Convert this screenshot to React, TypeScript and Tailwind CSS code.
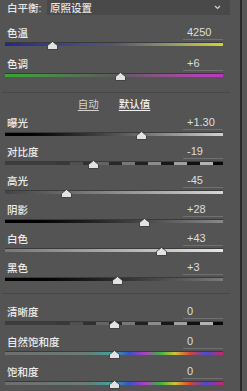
import type { ReactNode } from "react";

type TrackKind =
  | "temp"
  | "tint"
  | "exposure"
  | "contrast"
  | "highlights"
  | "shadows"
  | "whites"
  | "blacks"
  | "clarity"
  | "vibrance"
  | "saturation";

type Slider = {
  label: string;
  value: string;
  pos: number; // 0..1 along the track
  track: TrackKind;
};

const trackClass: Record<TrackKind, string> = {
  temp: "bg-linear-to-r from-[#24249a] via-[#565670] to-[#d4d422]",
  tint: "bg-linear-to-r from-[#2fa82f] via-[#5a5a5a] to-[#c62fc6]",
  exposure: "bg-linear-to-r from-[#000000] to-[#d2d2d2]",
  contrast: "bg-[#3c3c3c]",
  highlights: "bg-linear-to-r from-[#444444] to-[#d8d8d8]",
  shadows: "bg-linear-to-r from-[#000000] to-[#8a8a8a]",
  whites: "bg-linear-to-r from-[#777777] to-[#e6e6e6]",
  blacks: "bg-linear-to-r from-[#000000] to-[#7a7a7a]",
  clarity: "bg-[#3c3c3c]",
  vibrance:
    "bg-[linear-gradient(to_right,#6e6e6e_0%,#6a7c76_38%,#3aa4a4_50%,#3a50c8_57%,#b23cc0_64%,#3cb04a_71%,#d2c23a_78%,#d2443a_85%,#4a4ad2_92%,#c8286a_100%)]",
  saturation:
    "bg-[linear-gradient(to_right,#6e6e6e_0%,#6a7c76_38%,#3aa4a4_50%,#3a50c8_57%,#b23cc0_64%,#3cb04a_71%,#d2c23a_78%,#d2443a_85%,#4a4ad2_92%,#c8286a_100%)]",
};

const colorGroup: Slider[] = [
  { label: "色温", value: "4250", pos: 0.22, track: "temp" },
  { label: "色调", value: "+6", pos: 0.528, track: "tint" },
];

const toneGroup: Slider[] = [
  { label: "曝光", value: "+1.30", pos: 0.628, track: "exposure" },
  { label: "对比度", value: "-19", pos: 0.404, track: "contrast" },
  { label: "高光", value: "-45", pos: 0.28, track: "highlights" },
  { label: "阴影", value: "+28", pos: 0.638, track: "shadows" },
  { label: "白色", value: "+43", pos: 0.716, track: "whites" },
  { label: "黑色", value: "+3", pos: 0.514, track: "blacks" },
];

const presenceGroup: Slider[] = [
  { label: "清晰度", value: "0", pos: 0.5, track: "clarity" },
  { label: "自然饱和度", value: "0", pos: 0.5, track: "vibrance" },
  { label: "饱和度", value: "0", pos: 0.5, track: "saturation" },
];

function Segments() {
  // alternating dark / light blocks whose contrast grows to the right
  const seg = 13;
  const count = Math.ceil(218 / seg);
  const lerp = (a: number, b: number, t: number) => Math.round(a + (b - a) * t);
  return (
    <svg width="218" height="3" className="block">
      {Array.from({ length: count }).map((_, i) => {
        const t = Math.max(0, (i - 3) / (count - 4));
        const c = i % 2 === 0 ? lerp(60, 8, t) : lerp(60, 190, t);
        return <rect key={i} x={i * seg} y={0} width={seg} height={3} fill={`rgb(${c},${c},${c})`} />;
      })}
    </svg>
  );
}

function Thumb({ pos }: { pos: number }) {
  return (
    <svg
      width="11"
      height="9"
      viewBox="0 0 11 9"
      className="absolute top-[-2px]"
      style={{ left: `calc(${pos * 100}% - 5.5px)` }}
    >
      <polygon points="5.5,0.5 10.5,4.5 10.5,8.5 0.5,8.5 0.5,4.5" fill="#e2e2e2" stroke="#2c2c2c" strokeWidth="0.8" />
    </svg>
  );
}

function SliderRow({ s, height }: { s: Slider; height: string }) {
  const segmented = s.track === "contrast" || s.track === "clarity";
  return (
    <div className={height}>
      <div className="flex h-[15px] items-center justify-between pl-[7px] pr-[17px]">
        <span className="text-[10.5px] font-medium leading-[14px] text-[#ececec]">{s.label}</span>
        <span className="h-[15px] w-[40px] border-b border-[#707070] pl-[4px] text-[11px] leading-[14px] text-[#dedede]">
          {s.value}
        </span>
      </div>
      <div className={`relative ml-[5px] mt-[3px] h-[3px] w-[218px] shadow-[0_-1px_0_#3a3a3a] ${trackClass[s.track]}`}>
        {segmented && <Segments />}
        <Thumb pos={s.pos} />
      </div>
    </div>
  );
}

function Separator({ className }: { className: string }) {
  return <div className={`h-px w-[228px] ml-[2px] bg-[#474747] ${className}`} />;
}

function Group({ children, className }: { children: ReactNode; className: string }) {
  return <div className={className}>{children}</div>;
}

export default function App() {
  return (
    <div className="flex h-[391px] w-[247px] overflow-hidden bg-[#545454] font-['Liberation_Sans','Noto_Sans_CJK_SC',sans-serif]">
      <div className="w-[240px] shrink-0">
        <div className="flex h-[15px] items-center">
          <span className="w-[47px] whitespace-nowrap pl-[7px] text-[10.5px] font-medium leading-[14px] text-[#e6e6e6]">
            白平衡:
          </span>
          <div className="flex h-[15px] w-[183px] items-center justify-between bg-[#494949] pl-[3px] pr-[9px]">
            <span className="text-[10.5px] font-medium leading-[14px] text-[#e6e6e6]">原照设置</span>
            <svg width="7" height="5" viewBox="0 0 7 5">
              <path d="M1 1 L3.5 3.5 L6 1" fill="none" stroke="#d0d0d0" strokeWidth="1.2" />
            </svg>
          </div>
        </div>

        <Group className="mt-[10px]">
          {colorGroup.map((s) => (
            <SliderRow key={s.label} s={s} height="h-[31px]" />
          ))}
        </Group>

        <Separator className="mt-[5px]" />

        <div className="flex h-[22px] items-center justify-center gap-[20px] pr-[12px] text-[10.5px] leading-[14px]">
          <span className="text-[#d2d2d2] underline underline-offset-2">自动</span>
          <span className="font-medium text-[#f2f2f2] underline underline-offset-2">默认值</span>
        </div>

        <Group className="">
          {toneGroup.map((s) => (
            <SliderRow key={s.label} s={s} height="h-[29px]" />
          ))}
        </Group>

        <Separator className="mt-[4px]" />

        <Group className="mt-[10px]">
          {presenceGroup.map((s) => (
            <SliderRow key={s.label} s={s} height="h-[30px]" />
          ))}
        </Group>
      </div>
      <div className="h-full w-[2px] shrink-0 bg-[#2a2a2a]" />
      <div className="h-full flex-1 bg-[#575757]" />
    </div>
  );
}
